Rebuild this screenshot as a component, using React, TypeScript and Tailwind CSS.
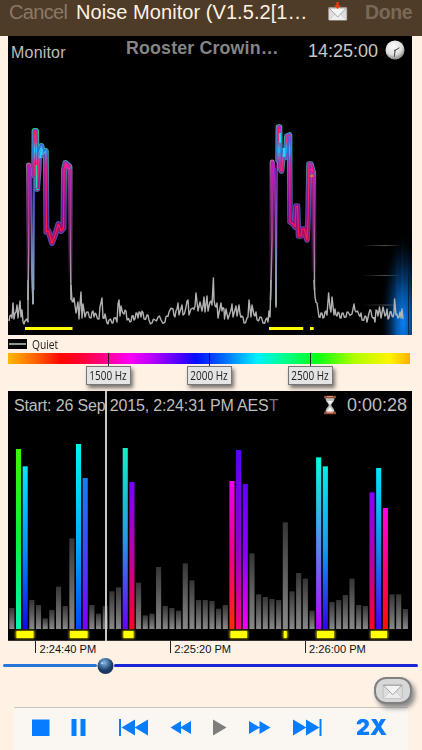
import React from "react";

type Point = [number, number];

const firstNoise: Point[] = [
  [9, 321], [11, 315], [12, 318], [13, 303], [14, 319], [16, 312], [17, 305], [18, 318], [20, 301], [21, 317], [22, 310], [23, 322], [25, 321], [28, 322], [28, 280],
];

const middleNoise: Point[] = [
  [71, 285], [72, 301], [74, 298], [76, 313], [78, 302], [79, 319], [80, 304], [81, 292], [82, 318], [83, 304], [85, 317], [88, 312], [91, 318], [93, 311], [94, 317],
  [96, 314], [99, 319], [100, 307], [102, 298], [103, 318], [105, 314], [107, 323], [109, 320], [112, 323], [114, 318], [117, 322], [118, 304],
  [119, 300], [120, 316], [121, 306], [124, 314], [126, 311], [127, 320], [130, 322], [132, 316], [134, 320], [136, 313], [138, 318], [139, 312], [141, 317],
  [142, 311], [144, 319], [147, 315], [149, 320], [152, 323], [155, 320], [158, 317], [161, 320], [165, 322], [167, 316], [169, 312], [173, 309], [175, 317], [177, 309],
  [178, 303], [179, 315], [182, 305], [183, 315], [186, 307], [188, 300], [189, 315], [193, 308], [195, 306], [196, 293], [198, 311], [200, 302], [202, 311], [203, 306],
  [204, 297], [205, 312], [207, 296], [208, 311], [210, 302], [212, 305], [213.4, 278], [214, 300], [216, 307], [217, 303], [218, 318], [221, 303], [222, 311], [224, 309],
  [224.5, 319], [226, 309], [228, 319], [231, 310], [232, 304], [233, 317], [236, 306], [237, 316], [239, 305], [240, 314], [242, 316], [244, 323], [247, 318], [248, 317], [249, 300],
  [251, 317], [252, 305], [254, 315], [256, 312], [257, 320], [260, 317], [263, 323], [266, 319], [268, 322], [269, 311], [270, 317], [271, 280],
];

const lastNoise: Point[] = [
  [314, 280], [315, 297], [317, 303], [319, 317], [321, 313], [323, 318], [325, 312], [327, 315], [328.6, 293], [330, 308], [331, 312], [332, 297], [334, 315], [335, 309], [337, 316],
  [339, 313], [341, 318], [343, 313], [346, 317], [348, 312], [352, 314], [354, 304], [356, 312], [359, 315], [361, 313], [362, 320], [365, 316], [367, 322], [369, 313],
  [371, 311], [373, 318], [375, 322], [376, 310], [378, 316], [379.5, 307], [381, 318], [383, 307], [385, 316], [387, 309], [388, 319], [390, 312], [392, 316], [394, 313],
  [394.6, 299], [396, 315], [398, 318], [400, 312], [401, 318], [402, 309], [403, 319],
];

const callOne =
  "M28 300 L28.6 250 L28.6 166 Q29.5 163 31 170 L31.5 215 L32 270 L33 304 L34 180 L34 131 L36 131 L37 189 L38.5 170 L39 153 L41.5 146 L42.5 155 L45.5 151 L46 170 L46.4 232 L48.5 231 L52 243 L55 235 L58.5 224 L61 231 L63.5 228 L64 170 L65.5 163 L69 166 L70.5 175 L70.5 250 L71 300";
const callTwo =
  "M270.5 300 L272 240 L272 162 L274.5 166 L275.5 215 L276 307 L277 180 L278 127 L279.5 127 L280 168 L281.5 171 L283.5 151 L285.5 157 L287 136 L289.5 135 L290 222 L293 224 L295 227 L296 206 L297.5 206 L298.5 236 L301 236 L302 229 L304.5 229 L307 240 L308 220 L309 164 L311 164 L314 175 L314.5 290";
const hotOne = "M34.2 175 L34.6 131 L36 131 L37 189 L38.5 170 L39 153 L41.5 146 L42.5 155 L45.8 151 L46 170 L46.4 232 L48.5 231 L52 243 L55 235 L58.5 224 L61 231 L63.5 228 L64 170 L65.5 163 L69 166";
const hotTwo = "M278 160 L278.4 127 L279.5 127 L280 168 L281.5 171 L283.5 151 L285.5 157 L287 136 L289.5 135 L290 222 L293 224 L295 227 L296 206 L297.5 206 L298.5 236 L301 236 L302 229 L304.5 229 L307 240 L308 220 L309 164 L311 164 L313 172";
const fadingStems = "M28.6 290 L28.6 165 M70 167 L70.6 280 M271.6 290 L272.2 162 M313.6 172 L314 270";

/* Adds a small zigzag between samples so the quiet trace looks grainy. */
const toPoints = (pts: Point[]) =>
  pts
    .flatMap(([x, y], i) => {
      const next = pts[i + 1];
      if (!next || Math.abs(next[1] - y) > 8 || next[0] - x < 1.5) return [`${x},${y}`];
      const offset = i % 2 ? 2.4 : -2.4;
      return [`${x},${y}`, `${(x + next[0]) / 2},${(y + next[1]) / 2 + offset}`];
    })
    .join(" ");

const barHeights = [
  63, 540, 488, 87, 72, 32, 57, 127, 69, 272, 555, 453, 72, 46, 69, 113, 125, 543, 441, 139, 41, 46, 186, 69, 63, 55, 197, 146, 87, 87,
  84, 61, 72, 444, 537, 435, 227, 104, 96, 90, 87, 320, 113, 168, 151, 55, 515, 488, 81, 87, 102, 151, 72, 69, 410, 483, 363, 104, 104, 60,
];

const barColors: Record<number, [string, string, string]> = {
  1: ["#3df500", "#05f53c", "#00f5b5"],
  2: ["#00e8f5", "#0092ff", "#1008f0"],
  10: ["#00f5e8", "#00b4f8", "#0048ff"],
  11: ["#1080f4", "#3b48f8", "#7a00ff"],
  17: ["#12f0c4", "#2998e4", "#6800f5"],
  18: ["#7600ff", "#bf00a5", "#ff0028"],
  33: ["#ed00f0", "#f0008b", "#ff2900"],
  34: ["#5800ff", "#8f00cf", "#fa0080"],
  35: ["#6000ff", "#8c00f8", "#f500ef"],
  46: ["#00ffe0", "#548de9", "#bd00ff"],
  47: ["#00f0e8", "#10a0ed", "#3000f5"],
  54: ["#8400ff", "#b600ab", "#ff0028"],
  55: ["#00e8ff", "#1688ec", "#4300fa"],
  56: ["#ff00e5", "#fa0079", "#ff1000"],
};

const eventMarks: Point[] = [[16.5, 17], [70, 17.5], [123.5, 10], [230.5, 16.5], [283.8, 3], [317, 17], [371, 16]];

function Envelope({ arrow = false, className = "" }: { arrow?: boolean; className?: string }) {
  return (
    <svg viewBox="0 0 20 20" className={className}>
      <rect x=".6" y="6.4" width="18.2" height="12.8" rx=".6" fill="#dedede" stroke="#aaa6a0" strokeWidth=".5" />
      <path d="M1 19 7.5 12.4 9.7 14.4 12 12.4 18.5 19Z" fill="#ededed" />
      <path d="M1 7 9.7 16 18.4 7Z" fill="#f3f3f3" stroke="#898989" strokeWidth=".7" />
      <path d="M1 19 7 12.8M18.4 19 12.4 12.8" stroke="#bbb" strokeWidth=".5" />
      {arrow && <path d="M8.4 1h2.2v3.2h2.2L9.5 8 6.2 4.2h2.2Z" fill="#f23b11" />}
    </svg>
  );
}

function Clock() {
  return (
    <svg viewBox="0 0 20 20" className="h-5 w-5">
      <defs>
        <radialGradient id="face" cx=".42" cy=".3" r=".65">
          <stop stopColor="#fff" /><stop offset=".7" stopColor="#dcdcdc" /><stop offset="1" stopColor="#989898" />
        </radialGradient>
      </defs>
      <circle cx="10" cy="10" r="9.5" fill="url(#face)" />
      <path d="M10 10.5 14 8M10 10.5 9.4 16.4" stroke="#444" strokeWidth="1" strokeLinecap="round" />
      <circle cx="10" cy="10.4" r=".9" fill="#555" />
    </svg>
  );
}

function Hourglass() {
  return (
    <svg viewBox="0 0 14 20" className="h-5 w-3.5">
      <path d="M2.5 3C2.5 7 5.7 8 5.7 10S2.5 13 2.5 17h9C11.5 13 8.3 12 8.3 10s3.2-3 3.2-7Z" fill="#b9bec0" />
      <path d="M4 6h6L7 9.3ZM3.3 16.8 7 12l3.7 4.8Z" fill="#faf6ef" />
      <rect x="1" y=".7" width="12" height="2.5" rx=".7" fill="#9d4d32" />
      <rect x="1" y="16.8" width="12" height="2.5" rx=".7" fill="#9d4d32" />
      <path d="M4 1.5h6M4 17.6h6" stroke="#e9b19b" strokeWidth=".8" />
    </svg>
  );
}

function SpectrumChart() {
  return (
    <svg viewBox="8 36 404 299" className="col-start-1 row-start-1 h-[299px] w-[404px]" fill="none" strokeLinejoin="round">
      <defs>
        <linearGradient id="edge" gradientUnits="userSpaceOnUse" x1="0" y1="126" x2="0" y2="245">
          <stop stopColor="#28e09a" /><stop offset=".12" stopColor="#2cc6b8" /><stop offset=".42" stopColor="#5b83a8" />
          <stop offset=".72" stopColor="#4866b0" /><stop offset="1" stopColor="#5550d2" />
        </linearGradient>
        <linearGradient id="inner" gradientUnits="userSpaceOnUse" x1="0" y1="126" x2="0" y2="245">
          <stop stopColor="#9b30e5" /><stop offset=".2" stopColor="#2a70e0" /><stop offset=".36" stopColor="#b01a9c" /><stop offset=".7" stopColor="#730da5" /><stop offset="1" stopColor="#b4104d" />
        </linearGradient>
        <linearGradient id="core" gradientUnits="userSpaceOnUse" x1="0" y1="126" x2="0" y2="310">
          <stop stopColor="#ee264b" /><stop offset=".08" stopColor="#f02a70" /><stop offset=".13" stopColor="#11d3ff" /><stop offset=".2" stopColor="#fa2278" /><stop offset=".62" stopColor="#ff1846" /><stop offset="1" stopColor="#b7b7b7" />
        </linearGradient>
        <linearGradient id="stem" gradientUnits="userSpaceOnUse" x1="0" y1="160" x2="0" y2="310">
          <stop stopColor="#c019c6" /><stop offset=".4" stopColor="#a83c96" /><stop offset=".8" stopColor="#aaa2ad" /><stop offset="1" stopColor="#b6b6b6" />
        </linearGradient>
        <linearGradient id="stemGlow" gradientUnits="userSpaceOnUse" x1="0" y1="160" x2="0" y2="290">
          <stop stopColor="#a08898" /><stop offset=".25" stopColor="#7a4a90" stopOpacity=".85" /><stop offset="1" stopColor="#503050" stopOpacity="0" />
        </linearGradient>
        <linearGradient id="stemInner" gradientUnits="userSpaceOnUse" x1="0" y1="160" x2="0" y2="280">
          <stop stopColor="#d012a0" /><stop offset=".5" stopColor="#80106c" stopOpacity=".8" /><stop offset="1" stopColor="#500c40" stopOpacity="0" />
        </linearGradient>
        <linearGradient id="blueStem" gradientUnits="userSpaceOnUse" x1="0" y1="165" x2="0" y2="300">
          <stop stopColor="#3333e8" /><stop offset=".5" stopColor="#4c74c8" /><stop offset="1" stopColor="#9fb0b6" />
        </linearGradient>
        <radialGradient id="glow" gradientUnits="userSpaceOnUse" cx="0" cy="0" r="1" gradientTransform="translate(403 323) scale(23 93)">
          <stop stopColor="#0884ff" /><stop offset=".35" stopColor="#0460bd" stopOpacity=".8" /><stop offset=".7" stopColor="#033262" stopOpacity=".4" /><stop offset="1" stopColor="#000" stopOpacity="0" />
        </radialGradient>
        <linearGradient id="beam" x2="0" y2="1">
          <stop stopColor="#126bbb" stopOpacity="0" /><stop offset="1" stopColor="#126bbb" stopOpacity=".45" />
        </linearGradient>
        <linearGradient id="faintLine">
          <stop stopColor="#888" stopOpacity="0" /><stop offset=".6" stopColor="#777" stopOpacity=".65" /><stop offset="1" stopColor="#777" stopOpacity="0" />
        </linearGradient>
      </defs>
      <rect x="375" y="225" width="37" height="110" fill="url(#glow)" />
      <rect x="396.5" y="245" width="1" height="90" fill="url(#beam)" />
      <rect x="402" y="235" width="1" height="100" fill="url(#beam)" />
      <rect x="406.5" y="245" width="1" height="90" fill="url(#beam)" />
      <path d="M408.5 275V335" stroke="#00152a" strokeWidth="1" opacity=".7" />
      {[245, 275, 304.5].map((y) => <rect key={y} x="363" y={y} width="38" height="1" fill="url(#faintLine)" />)}
      <g stroke="#b2b2b2" strokeWidth="1.4">
        <polyline points={toPoints(firstNoise)} />
        <polyline points={toPoints(middleNoise)} />
        <polyline points={toPoints(lastNoise)} />
      </g>
      <path d={fadingStems} stroke="url(#stemGlow)" strokeWidth="5" strokeLinecap="round" />
      <path d={fadingStems} stroke="url(#stemInner)" strokeWidth="3.2" strokeLinecap="round" />
      <path d={callOne} stroke="url(#stem)" strokeWidth="1.5" />
      <path d={callTwo} stroke="url(#stem)" strokeWidth="1.5" />
      <path d="M31.5 168 L32 270 L33 304 M34 180 L33.6 290 M275.5 168 L276 305" stroke="url(#blueStem)" strokeWidth="1.6" />
      <g strokeLinecap="round">
        <path d={hotOne} stroke="url(#edge)" strokeWidth="6" opacity=".9" />
        <path d={hotTwo} stroke="url(#edge)" strokeWidth="5.6" opacity=".9" />
        <path d={hotOne} stroke="url(#inner)" strokeWidth="4" />
        <path d={hotTwo} stroke="url(#inner)" strokeWidth="3.8" />
        <path d={hotOne} stroke="url(#core)" strokeWidth="1.2" />
        <path d={hotTwo} stroke="url(#core)" strokeWidth="1.2" />
      </g>
      <path d="M36 189 a2.2 2.2 0 0 0 2.6 0 M36.4 165V188" stroke="#27d99a" strokeWidth="1.5" />
      <path d="M40 158 42 149M280 133V143M284 157V148" stroke="#20d7ef" strokeWidth="2" />
      <path d="M65 165 69 169M310.5 169 313 172" stroke="#ff1aaa" strokeWidth="2" />
      <path d="M310 176h3.4" stroke="#ff9b00" strokeWidth="1.3" />
      <path d="M25 328.5H72.5M269 328.5H303.2M310 328.5H313.7" stroke="#ff0" strokeWidth="3" />
    </svg>
  );
}

function BarChart() {
  return (
    <svg viewBox="8 391 404 250" className="col-start-1 row-start-1 h-[250px] w-[404px]">
      <defs>
        <linearGradient id="grayBar" x2="0" y2="1"><stop stopColor="#353535" /><stop offset="1" stopColor="#898989" /></linearGradient>
        <filter id="soft" x="-50%" y="-50%" width="200%" height="200%"><feGaussianBlur stdDeviation="1.1" /></filter>
        {Object.entries(barColors).map(([i, colors]) => (
          <linearGradient key={i} id={`bar${i}`} x2="0" y2="1">
            {colors.map((c, j) => <stop key={c} offset={j / 2} stopColor={c} />)}
          </linearGradient>
        ))}
      </defs>
      {barHeights.map((h, i) => (
        <rect key={i} x={9.3 + i * 6.67} y={629 - h / 3} width="5.1" height={h / 3} fill={barColors[i] ? `url(#bar${i})` : "url(#grayBar)"} />
      ))}
      {eventMarks.map(([x, width]) => (
        <g key={x}>
          <rect x={x - 1} y="630.5" width={width + 2} height="8" fill="#bbb000" filter="url(#soft)" />
          <rect x={x} y="631" width={width} height="7" fill="#ff0" />
        </g>
      ))}
      <rect x="8" y="640" width="404" height="1" fill="#333" />
    </svg>
  );
}

function ScaleLabel({ value }: { value: string }) {
  return (
    <div className="flex w-[45px] flex-col items-center">
      <div className="h-[13px] w-px bg-black/80" />
      <div className="flex h-[19px] w-[45px] items-center justify-center border border-[#777] bg-[#e4e4e4] shadow-[2px_3px_4px_#77716b]">
        <span className="inline-block scale-x-[.78] whitespace-nowrap font-['Open_Sans',sans-serif] text-[12.8px] leading-none text-[#222]">{value} Hz</span>
      </div>
    </div>
  );
}

function TimeLabel({ time }: { time: string }) {
  return (
    <div className="flex w-[134.8px] shrink-0 gap-[3.5px]">
      <div className="h-3 w-px bg-[#222]" />
      <span className="whitespace-nowrap pt-0.5 text-[11.1px] leading-[13px] text-[#111]">{time} PM</span>
    </div>
  );
}

export default function App() {
  return (
    <main className="flex h-[750px] w-[422px] flex-col overflow-hidden bg-[#fff1e4] font-['Liberation_Sans',Arial,sans-serif]">
      <header className="flex h-9 shrink-0 bg-[#4e3b28] pl-[9px] text-xl leading-[24px]">
        <span className="w-[67px] shrink-0 tracking-[-.65px] text-[#8a7965]">Cancel</span>
        <h1 className="w-[252px] shrink-0 whitespace-nowrap tracking-[.06px] text-[#fff1e1]">Noise Monitor (V1.5.2[1…</h1>
        <Envelope arrow className="mt-px h-5 w-5 shrink-0" />
        <span className="ml-[17px] text-[19.5px] font-bold tracking-[-.4px] text-[#796958]">Done</span>
      </header>

      <section className="ml-2 grid h-[299px] w-[404px] shrink-0 bg-black">
        <SpectrumChart />
        <div className="z-10 col-start-1 row-start-1 flex h-8 pl-[3px] pt-[3px]">
          <span className="w-[115px] pt-1 text-[16px] leading-5 tracking-[.2px] text-[#bdbdbd]">Monitor</span>
          <strong className="w-[182px] whitespace-nowrap text-[17.8px] leading-[18px] tracking-[.17px] text-[#858585]">Rooster Crowin…</strong>
          <span className="w-[77px] pt-0.5 text-lg leading-[20px] text-[#c7c7c7]">14:25:00</span>
          <div className="pt-px"><Clock /></div>
        </div>
      </section>

      <div className="flex h-[18px] shrink-0 items-center gap-[5px] pl-2">
        <div className="flex h-[10px] w-[19px] items-center bg-black px-px"><div className="h-0.5 w-full bg-[#8c9995]" /></div>
        <span className="inline-block origin-left scale-x-[.8] font-['Open_Sans',sans-serif] text-[12.8px] leading-none text-[#222]">Quiet</span>
      </div>
      <div className="ml-2 flex h-[38px] w-[402px] shrink-0 flex-col">
        <div className="h-[11px] shrink-0 bg-[linear-gradient(to_right,#ffb800_0%,#ff6000_7%,#ff0800_13%,#ff0030_18%,#ff009c_25%,#ff00f4_30%,#b400ff_36%,#3900ff_44%,#0010ff_47%,#0060ff_53%,#00f0ff_62%,#00ff99_68%,#09ff16_77%,#acff00_86%,#fff400_95%,#ffb000_100%)]" />
        <div className="-mt-[11px] ml-[78px] flex gap-[55.8px]">
          <ScaleLabel value="1500" /><ScaleLabel value="2000" /><ScaleLabel value="2500" />
        </div>
      </div>

      <section className="ml-2 grid h-[250px] w-[404px] shrink-0 bg-black">
        <BarChart />
        <div className="z-10 col-start-1 row-start-1 flex h-7 pl-[6px] pt-1 text-[#bdbdbd]">
          <span className="w-[309px] whitespace-nowrap pt-px text-[16px] leading-5 tracking-[-.15px]">Start: 26 Sep 2015, 2:24:31 PM AES<span className="text-[#777]">T</span></span>
          <div className="w-[24px]"><Hourglass /></div>
          <span className="text-lg leading-[20px]">0:00:28</span>
        </div>
        <div className="z-20 col-start-1 row-start-1 ml-[97px] w-0.5 bg-[#c7c7c7]" />
      </section>

      <div className="flex h-[15px] shrink-0 pl-[35px]">
        <TimeLabel time="2:24:40" /><TimeLabel time="2:25:20" /><TimeLabel time="2:26:00" />
      </div>

      <div className="flex h-[19px] shrink-0 items-center pl-[3px]">
        <div className="h-[2.5px] w-[94px] rounded-full bg-[#2676da]" />
        <svg viewBox="0 0 18 18" className="h-[18px] w-[17px]">
          <defs><radialGradient id="knob" cx=".42" cy=".3"><stop stopColor="#84b6e4" /><stop offset=".5" stopColor="#4b77a9" /><stop offset="1" stopColor="#173962" /></radialGradient></defs>
          <circle cx="9" cy="9" r="8.5" fill="url(#knob)" /><circle cx="5.5" cy="6" r="1.1" fill="#c2ddf5" />
        </svg>
        <div className="h-[2.5px] w-[304px] rounded-full bg-[#1925d6]" />
      </div>

      <div className="z-10 flex h-[32px] shrink-0 items-start justify-end pr-[10px] pt-[2px]">
        <button className="flex h-[27px] w-[38px] items-center justify-center rounded-[12px] border-2 border-[#818181] bg-[#d8d8d8] shadow-[3px_4px_5px_#888]">
          <Envelope className="mb-[5px] h-[21px] w-[22px]" />
        </button>
      </div>
      <footer className="ml-[14px] flex h-[43px] w-[394px] shrink-0 border-t border-[#c8c3be] bg-[#faf6f2]">
        <svg viewBox="14 708 330 42" className="h-[42px] w-[330px]" fill="#087cff">
          <path d="M32 719.5h17.5V736H32ZM71.5 719h5v17h-5ZM80.5 719h5v17h-5Z" />
          <path d="M119 719h2v17h-2ZM121.5 727.5 135 719.5v16ZM134.5 727.5 148 719.5v16Z" />
          <path d="M170.5 727.5 181 721v13ZM180 727.5 191 721v13Z" />
          <path d="M213 719.5v16l13.5-8Z" fill="#7e7e7e" />
          <path d="M249 721v13l11-6.5ZM259.5 721v13l11-6.5Z" />
          <path d="M293 719.5v16l13.5-8ZM306 719.5v16l13.5-8ZM319.5 719h2v17h-2Z" />
        </svg>
        <strong className="ml-[12px] mt-[9px] inline-block origin-left scale-x-[1.03] font-['Inter',sans-serif] text-[21px] font-black leading-[22px] text-[#087cff]">2X</strong>
      </footer>
    </main>
  );
}
